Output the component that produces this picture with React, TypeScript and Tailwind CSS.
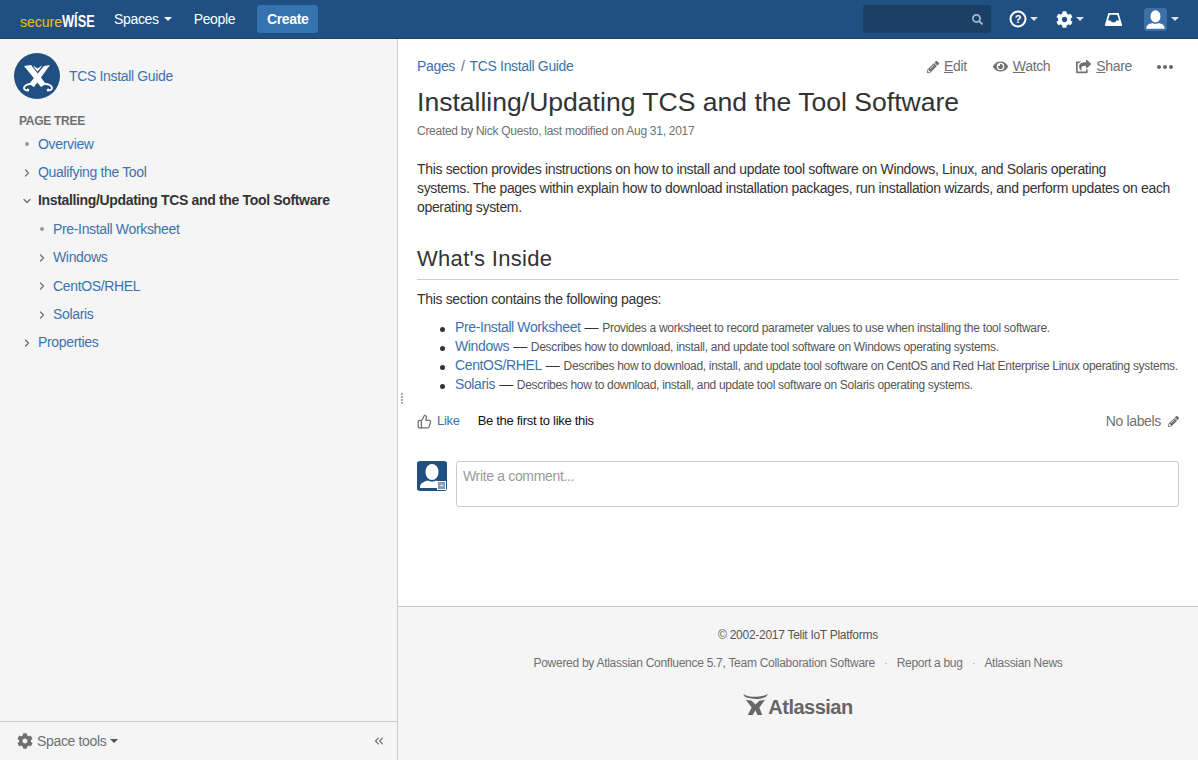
import { ChevronRight, ChevronDown, ChevronsLeft, ThumbsUp } from "lucide-react";
import { FaCog, FaEye, FaPencilAlt, FaSearch, FaShareSquare } from "react-icons/fa";

const Caret = ({ className = "" }: { className?: string }) => (
  <span className={`inline-block w-0 h-0 border-x-[4px] border-x-transparent border-t-[4px] ${className}`} />
);

const Avatar = ({ className = "" }: { className?: string }) => (
  <svg viewBox="0 0 30 30" className={className} fill="#fff">
    <ellipse cx="15" cy="11" rx="6.500" ry="8" />
    <path d="M3 27c0-5 3-6 8-7.500 2 1.500 6 1.500 8 0 5 1.500 8 2.500 8 7.500z" />
  </svg>
);

const Logo = () => (
  <svg viewBox="0 0 46 46" className="w-[46px] h-[46px]">
    <circle cx="23" cy="23" r="23" fill="#205081" />
    <path d="M10 13l7-1 15 19-5 3z" fill="#fff" />
    <path d="M36 12l-6 1-15 18 5 3z" fill="#fff" />
    <path d="M19 12.500c2 3 3 4.500 4.500 6 1.500-1.500 3-3 4.500-6l-4.500 3z" fill="#fff" />
    <path d="M17 31c-4 0-7 2-7 4 0 1.500 2 2.500 5 2.500M15 37.500l-2-1.500M31 31c4 0 7 2 7 4 0 1.500-2 2.500-5 2.500M33 37.500l2-1.500" fill="none" stroke="#fff" strokeWidth="1.800" />
  </svg>
);

const TreeItem = ({ label, depth = 0, state, current }: { label: string; depth?: number; state: "leaf" | "closed" | "open"; current?: boolean }) => (
  <li className={`flex items-center h-[28.400px] ${depth ? "pl-[38px]" : "pl-[23px]"}`}>
    <span className="w-[15px] flex items-center text-[#707070]">
      {state === "leaf" && <span className="ml-[2px] w-[4px] h-[4px] rounded-full bg-[#999]" />}
      {state === "closed" && <ChevronRight size={12} strokeWidth={2.500} className="-ml-[2px]" />}
      {state === "open" && <ChevronDown size={12} strokeWidth={2.500} className="-ml-[2px]" />}
    </span>
    {current ? (
      <span className="font-bold text-[#333]">{label}</span>
    ) : (
      <a className="text-[#3b73af]">{label}</a>
    )}
  </li>
);

const ChildPage = ({ title, text }: { title: string; text: string }) => (
  <li className="h-[19px] flex items-baseline whitespace-nowrap">
    <span className="w-[5px] h-[5px] rounded-full bg-[#333] mr-[10px] mb-[2px] shrink-0" />
    <a className="text-[#3b73af] tracking-[-0.38px]">{title}</a>
    <span className="mx-[4px]">—</span>
    <span className="text-[12px] tracking-[-0.3px] text-[#555]">{text}</span>
  </li>
);

const ActionLink = ({ icon, first, rest }: { icon: React.ReactNode; first: string; rest: string }) => (
  <a className="flex items-center gap-[5px] text-[#707070]">
    {icon}
    <span><span className="underline">{first}</span>{rest}</span>
  </a>
);

export default function App() {
  return (
    <div className="w-[1198px] h-[760px] flex flex-col overflow-hidden bg-white text-[14px] tracking-[-0.34px] text-[#333] font-['Liberation_Sans',Arial,sans-serif] relative">
      <header className="h-[39px] shrink-0 bg-[#205081] border-b border-[#2e3d54] flex items-center text-white">
        <div className="w-[114px] pl-[20px] flex items-baseline leading-none pt-[5px] tracking-normal">
          <span className="text-[#f5bc1c] text-[14px]">secure</span>
          <span className="inline-block font-bold text-[16px] scale-x-[0.8] origin-left">WÍSE</span>
        </div>
        <a className="flex items-center gap-[5px]">Spaces <Caret className="border-t-white" /></a>
        <a className="ml-[22px]">People</a>
        <button className="ml-[22px] h-[28px] w-[61px] rounded-[3px] bg-[#3572b0] font-bold text-[14px]">Create</button>
        <div className="ml-auto w-[128px] h-[28px] rounded-[3px] bg-[#1c3f66] flex items-center justify-end pr-[8px]">
          <FaSearch size={11} className="text-[#a5b7cb]" />
        </div>
        <div className="ml-[18px] flex items-center gap-[3px]">
          <svg viewBox="0 0 18 18" className="w-[18px] h-[18px]">
            <circle cx="9" cy="9" r="7.500" fill="none" stroke="#fff" strokeWidth="2" />
            <text x="9" y="13" textAnchor="middle" fontSize="11" fontWeight="700" fill="#fff">?</text>
          </svg>
          <Caret className="border-t-[#dbe3ec]" />
        </div>
        <div className="ml-[18px] flex items-center gap-[3px]">
          <FaCog size={17} />
          <Caret className="border-t-[#dbe3ec]" />
        </div>
        <svg viewBox="0 0 18 14" className="ml-[21px] w-[17px] h-[13px]" fill="#fff">
          <path d="M3.500 0h11L18 12v2H0v-2z" />
          <path d="M5 2h8l2 6h-3l-1 2H7L6 8H3z" fill="#205081" />
        </svg>
        <div className="ml-[22px] w-[23px] h-[23px] rounded-[3px] bg-[#3b6fa6] overflow-hidden">
          <Avatar className="w-[23px] h-[23px]" />
        </div>
        <Caret className="ml-[4px] mr-[19px] border-t-[#dbe3ec]" />
      </header>

      <div className="flex-1 flex min-h-0">
        <aside className="w-[398px] shrink-0 bg-[#f5f5f5] border-r border-[#ccc] flex flex-col">
          <div className="pl-[14px] pt-[14px] flex items-center gap-[9px]">
            <Logo />
            <a className="text-[#3b73af] text-[14px]">TCS Install Guide</a>
          </div>
          <h5 className="mt-[14px] pl-[19px] text-[12px] font-bold tracking-[-0.28px] leading-[16px] text-[#707070]">PAGE TREE</h5>
          <ul className="mt-[1px]">
            <TreeItem label="Overview" state="leaf" />
            <TreeItem label="Qualifying the Tool" state="closed" />
            <TreeItem label="Installing/Updating TCS and the Tool Software" state="open" current />
            <TreeItem label="Pre-Install Worksheet" depth={1} state="leaf" />
            <TreeItem label="Windows" depth={1} state="closed" />
            <TreeItem label="CentOS/RHEL" depth={1} state="closed" />
            <TreeItem label="Solaris" depth={1} state="closed" />
            <TreeItem label="Properties" state="closed" />
          </ul>
          <div className="mt-auto h-[39px] border-t border-[#ccc] flex items-center pl-[17px] pr-[11px] text-[#707070]">
            <FaCog size={16} />
            <span className="ml-[4px]">Space tools</span>
            <Caret className="ml-[4px] border-t-[#555]" />
            <ChevronsLeft size={14} className="ml-auto" />
          </div>
        </aside>

        <main className="flex-1 flex flex-col min-w-0">
          <div className="h-[567px] shrink-0 pl-[19px] pr-[19px]">
            <div className="flex items-center h-[54px] pt-[1px]">
              <a className="text-[#3b73af]">Pages</a>
              <span className="ml-[6px] mr-[5px] text-[#707070]">/</span>
              <a className="text-[#3b73af]">TCS Install Guide</a>
              <div className="ml-auto flex items-center">
                <ActionLink icon={<FaPencilAlt size={12} />} first="E" rest="dit" />
                <span className="ml-[26px]"><ActionLink icon={<FaEye size={15} />} first="W" rest="atch" /></span>
                <span className="ml-[26px]"><ActionLink icon={<FaShareSquare size={15} />} first="S" rest="hare" /></span>
                <span className="ml-[25px] mr-[6px] flex gap-[2px]">
                  <i className="w-[4px] h-[4px] rounded-full bg-[#666]" />
                  <i className="w-[4px] h-[4px] rounded-full bg-[#666]" />
                  <i className="w-[4px] h-[4px] rounded-full bg-[#666]" />
                </span>
              </div>
            </div>
            <h1 className="text-[26.550px] tracking-normal leading-[18px] text-[#333]">Installing/Updating TCS and the Tool Software</h1>
            <p className="mt-[12px] text-[12px] tracking-[-0.28px] leading-[16px] text-[#707070]">Created by Nick Questo, last modified on Aug 31, 2017</p>
            <p className="mt-[21px] leading-[19px] text-[#333]">
              This section provides instructions on how to install and update tool software on Windows, Linux, and Solaris operating<br />
              systems. The pages within explain how to download installation packages, run installation wizards, and perform updates on each operating system.
            </p>
            <h2 className="mt-[27px] text-[22px] tracking-[0.3px] leading-[30px] pb-[5px] border-b border-[#ccc] text-[#333]">What's Inside</h2>
            <p className="mt-[9px] leading-[20px]">This section contains the following pages:</p>
            <ul className="mt-[8px] pl-[23px]">
              <ChildPage title="Pre-Install Worksheet" text="Provides a worksheet to record parameter values to use when installing the tool software." />
              <ChildPage title="Windows" text="Describes how to download, install, and update tool software on Windows operating systems." />
              <ChildPage title="CentOS/RHEL" text="Describes how to download, install, and update tool software on CentOS and Red Hat Enterprise Linux operating systems." />
              <ChildPage title="Solaris" text="Describes how to download, install, and update tool software on Solaris operating systems." />
            </ul>
            <div className="mt-[18px] flex items-center h-[20px]">
              <ThumbsUp size={15} className="text-[#707070]" />
              <a className="ml-[5px] text-[#3b73af] text-[13px] tracking-[-0.3px]">Like</a>
              <span className="ml-[18px] text-[13px] tracking-[-0.3px] text-[#111]">Be the first to like this</span>
              <span className="ml-auto text-[#707070] flex items-center gap-[7px]">No labels <FaPencilAlt size={11} /></span>
            </div>
            <div className="mt-[30px] flex items-start gap-[9px]">
              <div className="relative w-[30px] h-[30px] rounded-[3px] bg-[#205081] overflow-hidden shrink-0">
                <Avatar className="w-[30px] h-[30px]" />
                <span className="absolute right-[1px] bottom-[1px] w-[9px] h-[9px] bg-[#7a9cc0] border border-white text-white text-[8px] leading-[7px] text-center">+</span>
              </div>
              <div className="flex-1 h-[46px] bg-white border border-[#ccc] rounded-[3px] px-[6px] py-[5px] text-[#999] leading-[18px]">Write a comment...</div>
            </div>
          </div>
          <footer className="flex-1 bg-[#f5f5f5] border-t border-[#ccc] flex flex-col items-center text-[12px] tracking-[-0.28px] text-[#707070]">
            <p className="mt-[20px] leading-[16px] text-[#555]">© 2002-2017 Telit IoT Platforms</p>
            <p className="mt-[12px] leading-[16px]">
              Powered by Atlassian Confluence 5.7, Team Collaboration Software
              <span className="mx-[9px] text-[#aaa]">·</span>Report a bug
              <span className="mx-[9px] text-[#aaa]">·</span>Atlassian News
            </p>
            <div className="mt-[21px] flex items-end text-[#666] font-bold text-[20px] leading-[22px] tracking-[-0.5px]">
              <svg viewBox="0 0 26 24" className="w-[25px] h-[25px] mb-[1px]" fill="#666">
                <path d="M0 1c7 4 18 4 26 0l-2 3c-6 3-15 3-22 0z" />
                <path d="M3 7l6 1 4 4 4-4 6-1-6 8 3 8-5 0-2-5-3 5-5 0 4-8z" />
              </svg>
              Atlassian
            </div>
          </footer>
        </main>
      </div>

      <div className="absolute left-[401px] top-[393px] flex flex-col gap-[1px]">
        {[0, 1, 2, 3].map((i) => (
          <i key={i} className="w-[1.500px] h-[2px] bg-[#aaa]" />
        ))}
      </div>
    </div>
  );
}
